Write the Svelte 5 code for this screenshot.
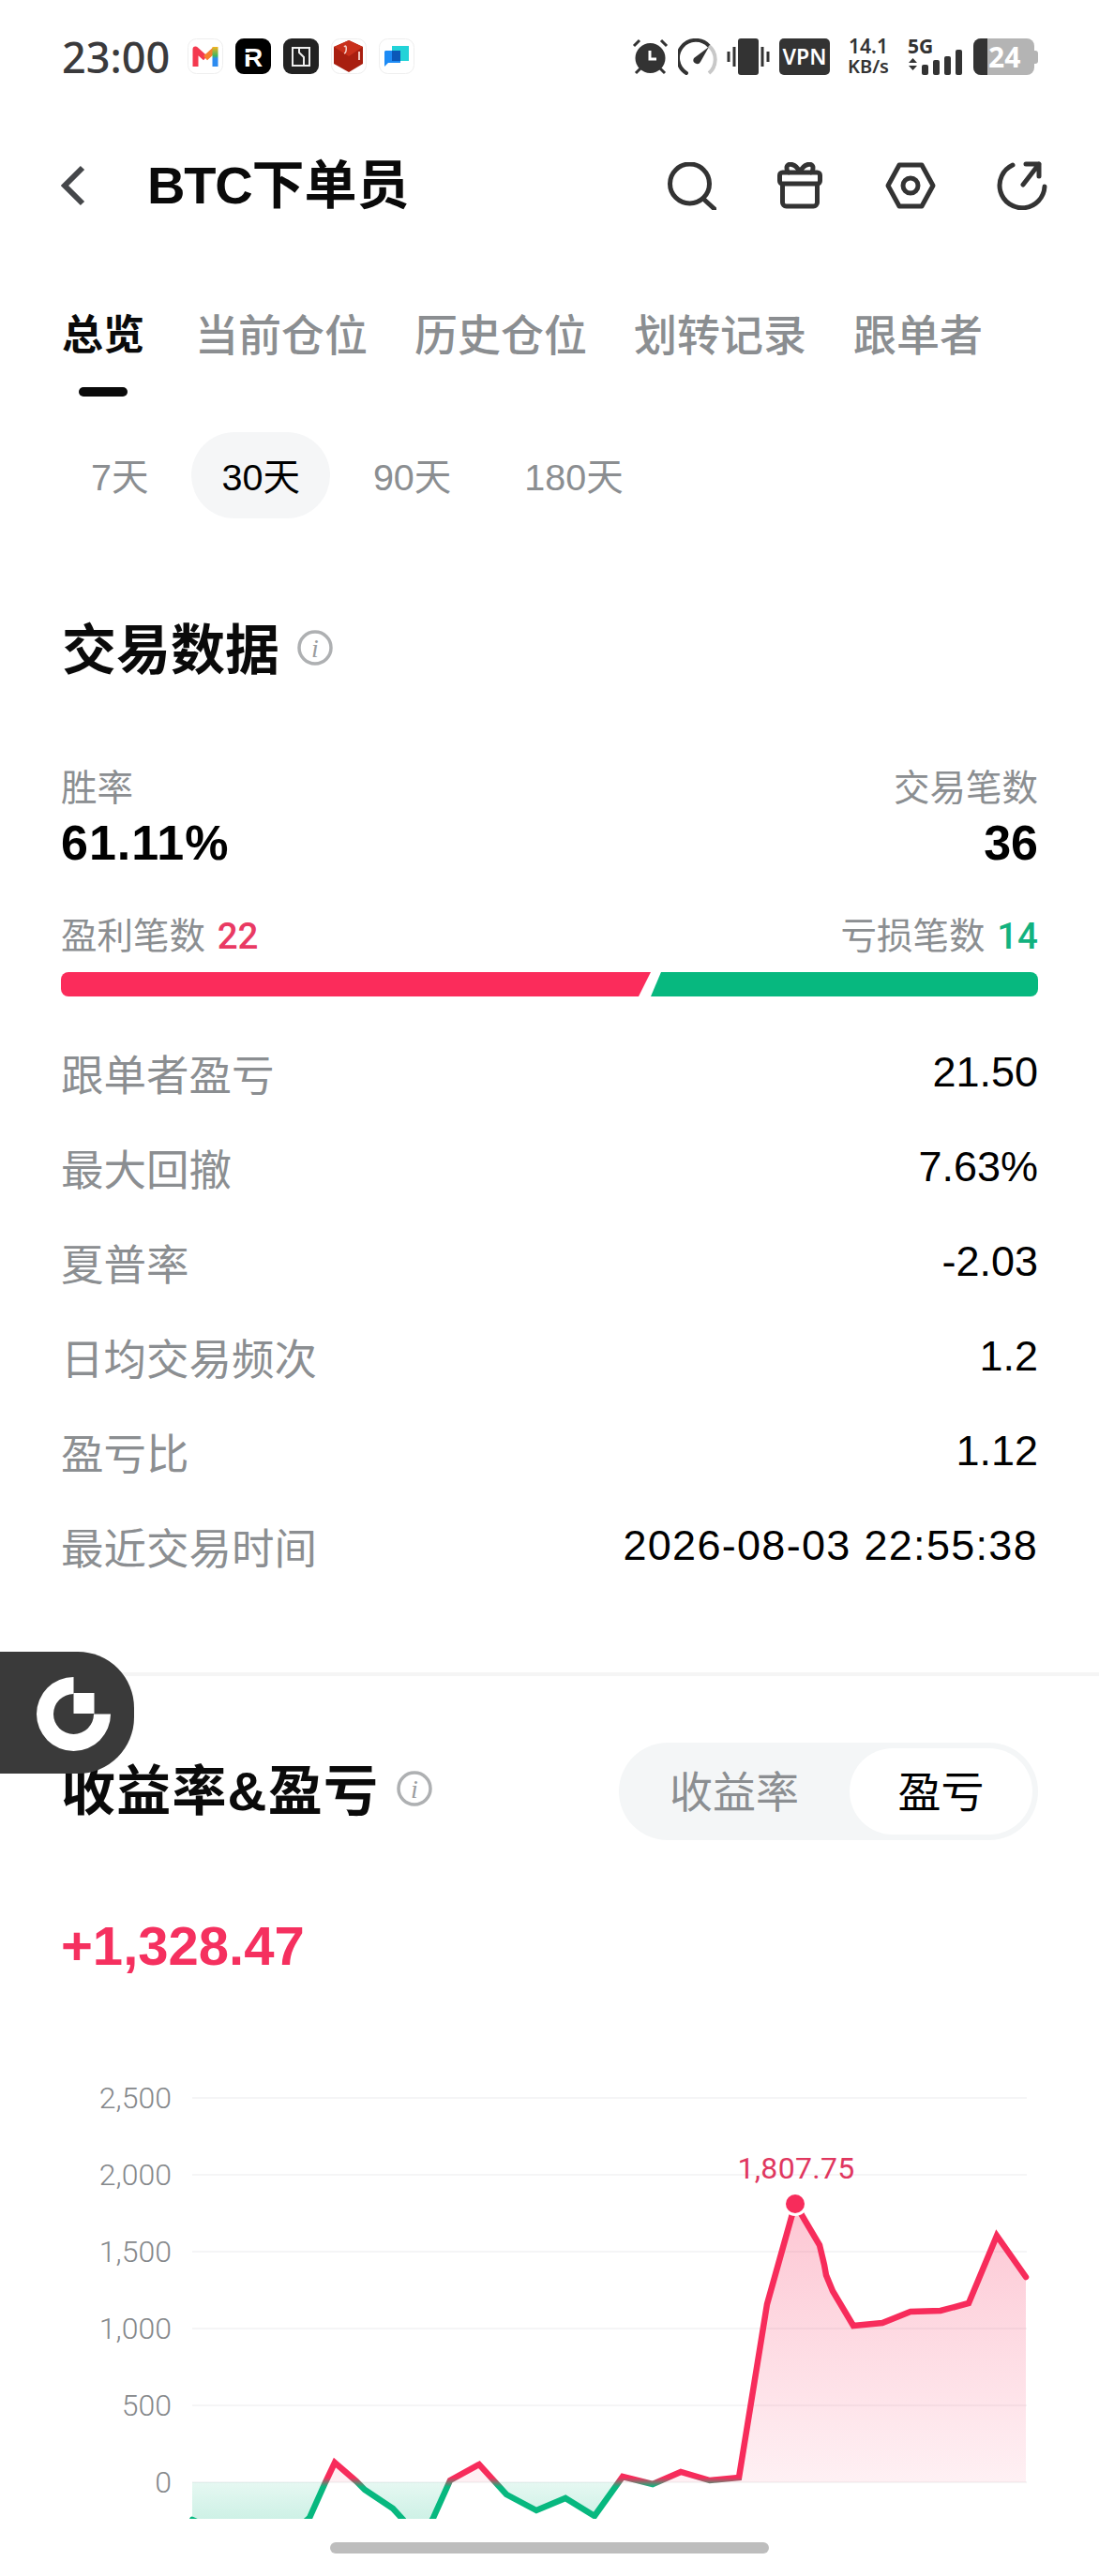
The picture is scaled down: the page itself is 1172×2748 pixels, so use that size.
<script lang="ts">
	const tabs = ['总览', '当前仓位', '历史仓位', '划转记录', '跟单者']
	const ranges = ['7天', '30天', '90天', '180天']
	const rows = [
		['跟单者盈亏', '21.50'],
		['最大回撤', '7.63%'],
		['夏普率', '-2.03'],
		['日均交易频次', '1.2'],
		['盈亏比', '1.12'],
		['最近交易时间', '2026-08-03 22:55:38']
	]

	// chart is drawn in page coordinates, see viewBox
	const left = 205
	const right = 1095
	const zero = 2648
	const clipBottom = 2687
	const grid = [
		['2,500', 2238],
		['2,000', 2320],
		['1,500', 2402],
		['1,000', 2484],
		['500', 2566],
		['0', zero]
	] as const
	const points = [
		[205, 2688], [236, 2702], [267, 2712], [300, 2712], [330, 2686], [347, 2648], [357, 2627],
		[380, 2647], [389, 2656], [419, 2676], [430, 2688], [447, 2712], [462, 2686],
		[480, 2646], [511, 2629], [540, 2661], [572, 2678], [603, 2665], [634, 2684],
		[664, 2642], [696, 2650], [726, 2637], [757, 2646], [788, 2643], [818, 2458],
		[848, 2351], [874, 2395], [879, 2416], [881, 2427], [888, 2444], [910, 2481],
		[941, 2478], [971, 2466], [1003, 2465], [1033, 2457], [1063, 2385], [1094, 2429]
	]
	const linePts = points.map((p) => p.join(',')).join(' ')
	const areaPts = `${left},${zero} ${linePts} 1094,${zero}`
</script>

<div class="page">
	<div class="status">
		<div class="status-left">
			<span class="time">23:00</span>
			<svg class="nicon" viewBox="0 0 38 38">
				<defs>
					<linearGradient id="gmRight" x1="0" y1="0" x2="0" y2="1">
						<stop offset="0" stop-color="#f6b21e" />
						<stop offset=".45" stop-color="#3fb65f" />
						<stop offset=".6" stop-color="#2d8cf0" />
					</linearGradient>
				</defs>
				<rect x=".5" y=".5" width="37" height="37" rx="9" fill="#fff" stroke="#eee" />
				<path d="M8.500 30V11.500L19 21" fill="none" stroke="#f4394f" stroke-width="6" stroke-linejoin="round" />
				<path d="M19 21 29.500 11.500" fill="none" stroke="#f6802e" stroke-width="6" />
				<rect x="26.500" y="9" width="6" height="21" fill="url(#gmRight)" />
			</svg>
			<svg class="nicon" viewBox="0 0 38 38">
				<rect width="38" height="38" rx="9" fill="#000" />
				<text x="19" y="30" text-anchor="middle" class="r-logo">R</text>
				<path d="M8 16h13" stroke="#000" stroke-width="2" />
			</svg>
			<svg class="nicon" viewBox="0 0 38 38">
				<rect width="38" height="38" rx="9" fill="#222" />
				<rect x="10" y="10" width="18" height="19" fill="none" stroke="#eee" stroke-width="2" />
				<path d="M17 10v5l5 5v9" fill="none" stroke="#eee" stroke-width="2" />
			</svg>
			<svg class="nicon" viewBox="0 0 38 38">
				<rect x=".5" y=".5" width="37" height="37" rx="9" fill="#fff" stroke="#eee" />
				<path d="M19 2 34 9V27L19 36 3 27V9Z" fill="#a81f10" />
				<path d="M19 2 34 9 19 19 3 9Z" fill="#c9301b" />
				<path d="M14 9c3-4 3 6 0 7" fill="none" stroke="#f4d6d0" stroke-width="1.500" />
				<path d="M30 14v9" stroke="#f0c8c0" stroke-width="2" />
			</svg>
			<svg class="nicon" viewBox="0 0 38 38">
				<rect x=".5" y=".5" width="37" height="37" rx="9" fill="#fff" stroke="#eee" />
				<path d="M14 8h18v16h-18Z" fill="#22d3d8" />
				<path d="M7 13h16v13H10l-4 4V14Z" fill="#1d8bf5" />
				<path d="M14 13h9v11h-9Z" fill="#0b57b8" />
			</svg>
		</div>
		<div class="status-right">
			<svg class="sicon" width="39" height="39" viewBox="0 0 39 39">
				<circle cx="19.500" cy="21" r="16" fill="#333" />
				<path d="M19 13v9h7" fill="none" stroke="#fff" stroke-width="3" />
				<path d="M2 8 8 2M37 8 31 2M4 37l5-5M35 37l-5-5" stroke="#333" stroke-width="3" />
			</svg>
			<svg class="sicon" width="42" height="39" viewBox="0 0 42 39">
				<path d="M9 37A19 19 0 1 1 33 8" fill="none" stroke="#333" stroke-width="4" stroke-linecap="round" />
				<path d="M33 8A19 19 0 0 1 33 37" fill="none" stroke="#c8c8c8" stroke-width="4" />
				<path d="M33 9 24 25a4 4 0 0 1-7-4Z" fill="#333" />
			</svg>
			<svg class="sicon" width="46" height="39" viewBox="0 0 46 39">
				<rect x="12" width="22" height="39" rx="3" fill="#333" />
				<path d="M2 14v11M8 9v21M38 9v21M44 14v11" stroke="#333" stroke-width="3" />
			</svg>
			<span class="vpn">VPN</span>
			<span class="speed"><b>14.1</b><b class="unit">KB/s</b></span>
			<span class="signal">
				<span class="fiveg">5G</span>
				<svg class="sicon" width="58" height="39" viewBox="0 0 58 39">
					<path d="M1 26 5.500 21 10 26ZM1 29 5.500 34 10 29Z" fill="#333" />
					<rect x="15" y="28" width="7" height="11" rx="2" fill="#333" />
					<rect x="27" y="23" width="7" height="16" rx="2" fill="#333" />
					<rect x="39" y="19" width="7" height="20" rx="2" fill="#333" />
					<rect x="51" y="12" width="7" height="27" rx="2" fill="#333" />
				</svg>
			</span>
			<span class="battery">
				<span class="batt-level"></span>
				<span class="batt-num">24</span>
				<span class="batt-tip"></span>
			</span>
		</div>
	</div>

	<div class="nav">
		<svg class="back" width="26" height="44" viewBox="0 0 26 44">
			<path d="M23 3 4 22l19 19" fill="none" stroke="#45474a" stroke-width="6" />
		</svg>
		<h1 class="title"><span class="latin">BTC</span>下单员</h1>
		<div class="nav-icons">
			<svg width="52" height="51" viewBox="0 0 52 51" fill="none" stroke="#333" stroke-width="5">
				<circle cx="23.500" cy="23" r="21" />
				<path d="M38 39 50 50" stroke-linecap="round" />
			</svg>
			<svg width="48" height="50" viewBox="0 0 48 50" fill="none" stroke="#333" stroke-width="5" stroke-linejoin="round">
				<rect x="2.500" y="11" width="43" height="12" rx="3" />
				<path d="M5.500 23v20a4 4 0 0 0 4 4h29a4 4 0 0 0 4-4V23" />
				<path d="M24 11C20 1 10 0 10 6c0 3 1 5 3 5M24 11c4-10 14-11 14-5 0 3-1 5-3 5" />
			</svg>
			<svg width="54" height="50" viewBox="0 0 54 50" fill="none" stroke="#333" stroke-width="5" stroke-linejoin="round">
				<path d="M15 3h24l12 22-12 22H15L3 25Z" />
				<circle cx="27" cy="25" r="8" />
			</svg>
			<svg width="54" height="52" viewBox="0 0 54 52" fill="none" stroke="#333" stroke-width="5" stroke-linecap="round" stroke-linejoin="round">
				<path d="M17 4A24 24 0 1 0 51 27" />
				<path d="M31 3h14v13M45 3 28 25" />
			</svg>
		</div>
	</div>

	<div class="tabs">
		{#each tabs as tab, i}
			<div class="tab" class:active={i === 0}>
				<span>{tab}</span>
				{#if i === 0}<i class="indicator"></i>{/if}
			</div>
		{/each}
	</div>

	<div class="ranges">
		{#each ranges as r, i}
			<span class="range" class:on={i === 1}>{r}</span>
		{/each}
	</div>

	<div class="heading first">
		<h2>交易数据</h2>
		{@render info()}
	</div>

	<div class="pair top">
		<span class="muted">胜率</span>
		<span class="muted">交易笔数</span>
	</div>
	<div class="pair big">
		<span class="rate">61.11%</span>
		<span>36</span>
	</div>

	<div class="pair counts">
		<span class="muted">盈利笔数 <em class="red">22</em></span>
		<span class="muted">亏损笔数 <em class="green">14</em></span>
	</div>
	<div class="ratio">
		<div class="ratio-red"></div>
		<div class="ratio-green"></div>
	</div>

	<div class="rows">
		{#each rows as [label, value], i}
			<div class="row">
				<span class="row-label">{label}</span>
				<span class="row-value" class:wide={i === rows.length - 1}>{value}</span>
			</div>
		{/each}
	</div>

	<div class="divider"></div>

	<div class="profit-head">
		<div class="heading">
			<h2 class="spaced">收益率&amp;盈亏</h2>
			{@render info()}
		</div>
		<div class="toggle">
			<span class="toggle-off">收益率</span>
			<span class="toggle-on">盈亏</span>
		</div>
	</div>

	<div class="profit">+1,328.47</div>

	<svg class="chart" width="1172" height="500" viewBox="0 2200 1172 500">
		<defs>
			<linearGradient id="redFill" gradientUnits="userSpaceOnUse" x1="0" y1="2350" x2="0" y2={zero}>
				<stop offset="0" stop-color="#f72c5b" stop-opacity=".27" />
				<stop offset="1" stop-color="#f72c5b" stop-opacity=".07" />
			</linearGradient>
			<linearGradient id="greenFill" gradientUnits="userSpaceOnUse" x1="0" y1={zero} x2="0" y2={clipBottom}>
				<stop offset="0" stop-color="#07b87f" stop-opacity=".1" />
				<stop offset="1" stop-color="#07b87f" stop-opacity=".2" />
			</linearGradient>
			<linearGradient id="lineColor" gradientUnits="userSpaceOnUse" x1="0" y1={zero - 5} x2="0" y2={zero + 5}>
				<stop offset="0" stop-color="#f72c5b" />
				<stop offset="1" stop-color="#07b87f" />
			</linearGradient>
			<clipPath id="above"><rect x={left} y="2200" width={right - left} height={zero - 2200} /></clipPath>
			<clipPath id="below"><rect x={left} y={zero} width={right - left} height={clipBottom - zero} /></clipPath>
			<clipPath id="plot"><rect x={left - 6} y="2200" width={right - left + 12} height={clipBottom - 2200} /></clipPath>
		</defs>

		{#each grid as [label, y]}
			<line x1={left} x2={right} y1={y} y2={y} class="gridline" />
			<text x="183" y={y + 11} text-anchor="end" class="axis">{label}</text>
		{/each}

		<polygon points={areaPts} fill="url(#redFill)" clip-path="url(#above)" />
		<polygon points={areaPts} fill="url(#greenFill)" clip-path="url(#below)" />
		<g clip-path="url(#plot)">
			<polyline points={linePts} class="line" stroke="url(#lineColor)" />
		</g>

		<circle cx="848" cy="2351" r="13" fill="#fff" />
		<circle cx="848" cy="2351" r="10" fill="#f72c5b" />
		<text x="849" y="2324" text-anchor="middle" class="peak">1,807.75</text>
	</svg>

	<div class="home-bar"></div>

	<div class="float-badge">
		<svg width="80" height="80" viewBox="0 0 80 80" fill="#fff">
			<path d="M39.500 1A39.500 39.500 0 1 0 79 40.500H61A21.500 21.500 0 1 1 39.500 19Z" />
			<rect x="39.500" y="18" width="22" height="22" />
		</svg>
	</div>
</div>

{#snippet info()}
	<svg class="info" width="38" height="38" viewBox="0 0 38 38">
		<circle cx="19" cy="19" r="17" fill="none" stroke="#aeb0b2" stroke-width="3.500" />
		<text x="19" y="29" text-anchor="middle" class="info-i">i</text>
	</svg>
{/snippet}

<style>
	:global(body) {
		margin: 0;
		background: #fff;
	}

	.page {
		position: relative;
		width: 1172px;
		height: 2748px;
		overflow: hidden;
		background: #fff;
		font-family: "Liberation Sans", "Noto Sans CJK SC", sans-serif;
		color: #000;
	}

	.status {
		height: 120px;
		padding: 0 65px 0 66px;
		display: flex;
		align-items: center;
		justify-content: space-between;
	}

	.status-left {
		display: flex;
		align-items: center;
	}

	.time {
		font-family: "Noto Sans", sans-serif;
		font-size: 45px;
		font-weight: 500;
		color: #3a3a3c;
		width: 134px;
	}

	.nicon {
		width: 38px;
		height: 38px;
		margin-right: 13px;
	}

	.r-logo {
		font-family: "Liberation Sans", sans-serif;
		font-weight: 700;
		font-size: 28px;
		fill: #fff;
	}

	.status-right {
		display: flex;
		align-items: center;
		gap: 10px;
	}

	.sicon {
		flex: none;
		display: block;
	}

	.vpn {
		width: 54px;
		height: 39px;
		background: #333;
		border-radius: 5px;
		color: #fff;
		font-family: "Noto Sans", sans-serif;
		font-size: 23px;
		font-weight: 600;
		line-height: 39px;
		text-align: center;
		margin-right: 9px;
	}

	.speed {
		width: 44px;
		display: flex;
		flex-direction: column;
		align-items: center;
		font-family: "Noto Sans", sans-serif;
		color: #333;
		margin-right: 10px;
		white-space: nowrap;
	}

	.speed b {
		font-size: 21px;
		line-height: 22px;
		font-weight: 600;
	}

	.speed .unit {
		font-size: 20px;
	}

	.signal {
		position: relative;
		height: 39px;
	}

	.fiveg {
		position: absolute;
		left: 0;
		top: 0;
		font-family: "Noto Sans", sans-serif;
		font-size: 21px;
		font-weight: 700;
		line-height: 17px;
		color: #333;
	}

	.battery {
		position: relative;
		width: 65px;
		height: 39px;
		margin-left: 2px;
		margin-right: 4px;
		background: #b4b4b4;
		border-radius: 8px;
		display: flex;
		align-items: center;
	}

	.batt-level {
		width: 15px;
		height: 39px;
		background: #333;
		border-radius: 8px 0 0 8px;
	}

	.batt-num {
		margin-left: 1px;
		color: #fff;
		font-family: "Noto Sans", sans-serif;
		font-size: 30px;
		font-weight: 700;
		line-height: 39px;
	}

	.batt-tip {
		position: absolute;
		right: -4px;
		top: 13px;
		width: 4px;
		height: 14px;
		background: #b4b4b4;
		border-radius: 0 3px 3px 0;
	}

	.nav {
		height: 156px;
		padding: 0 55px 0 65px;
		display: flex;
		align-items: center;
	}

	.back {
		flex: none;
	}

	.title {
		margin: 0 0 0 66px;
		font-size: 56px;
		font-weight: 700;
		color: #0a0a0a;
		line-height: 70px;
	}

	.latin {
		letter-spacing: -1.200px;
	}

	.nav-icons {
		margin-left: auto;
		display: flex;
		align-items: center;
		gap: 65px;
	}

	.nav-icons svg:nth-child(3) {
		margin-left: 2px;
	}

	.tabs {
		height: 147px;
		padding: 52px 0 0 66px;
		box-sizing: border-box;
		display: flex;
		align-items: flex-start;
		gap: 50px;
	}

	.tab {
		display: flex;
		flex-direction: column;
		align-items: center;
		font-size: 46px;
		font-weight: 500;
		line-height: 60px;
		color: #8b8e91;
	}

	.tab.active {
		color: #0a0a0a;
		font-weight: 700;
		font-size: 44px;
		margin-right: 4px;
	}

	.indicator {
		display: block;
		width: 52px;
		height: 10px;
		margin-top: 25px;
		background: #0a0a0a;
		border-radius: 5px;
	}

	.ranges {
		margin-top: 38px;
		padding-left: 65px;
		display: flex;
		gap: 14px;
	}

	.range {
		height: 92px;
		padding: 0 32px;
		border-radius: 46px;
		font-size: 39.500px;
		line-height: 96px;
		color: #8b8e91;
	}

	.range.on {
		background: #f5f6f7;
		color: #000;
	}

	.heading {
		display: flex;
		align-items: center;
		gap: 19px;
	}

	.heading.first {
		margin: 106px 0 0 66px;
	}

	.heading h2 {
		margin: 0;
		font-size: 58px;
		font-weight: 700;
		line-height: 70px;
		color: #0a0a0a;
	}

	.heading h2.spaced {
		letter-spacing: 1.200px;
	}

	.info {
		flex: none;
		margin-top: -7px;
	}

	.info-i {
		font-family: "Liberation Serif", serif;
		font-style: italic;
		font-size: 28px;
		fill: #9b9d9f;
	}

	.pair {
		padding: 0 65px;
		display: flex;
		justify-content: space-between;
	}

	.muted {
		font-size: 38.500px;
		color: #8b8e91;
	}

	.pair.top {
		margin-top: 87px;
		line-height: 50px;
	}

	.pair.big {
		margin-top: 3px;
		font-size: 52px;
		font-weight: 700;
		line-height: 60px;
	}

	.rate {
		letter-spacing: 1px;
	}

	.pair.counts {
		margin-top: 45px;
		line-height: 50px;
	}

	.counts em {
		font-family: "Roboto", sans-serif;
		font-style: normal;
		font-weight: 500;
		font-size: 38.500px;
		margin-left: 2px;
	}

	.red {
		color: #e93a63;
	}

	.green {
		color: #12b27f;
	}

	.ratio {
		margin: 13px 65px 0 65px;
		height: 26px;
		display: flex;
	}

	.ratio-red {
		width: 629px;
		background: #fb2c5b;
		border-radius: 8px 0 0 8px;
		clip-path: polygon(0 0, 100% 0, calc(100% - 13px) 100%, 0 100%);
	}

	.ratio-green {
		flex: 1;
		background: #07b87f;
		border-radius: 0 8px 8px 0;
		clip-path: polygon(11px 0, 100% 0, 100% 100%, 0 100%);
	}

	.rows {
		margin-top: 30px;
		padding: 0 65px;
	}

	.row {
		height: 101px;
		display: flex;
		align-items: center;
		justify-content: space-between;
	}

	.row-label {
		font-size: 45.500px;
		color: #8b8e91;
	}

	.row-value {
		font-size: 45px;
	}

	.row-value.wide {
		letter-spacing: 1.300px;
	}

	.divider {
		height: 4px;
		margin-top: 85px;
		background: #f5f5f5;
	}

	.profit-head {
		margin-top: 71px;
		padding: 0 65px;
		display: flex;
		align-items: center;
		justify-content: space-between;
	}

	.toggle {
		width: 447px;
		height: 104px;
		box-sizing: border-box;
		padding: 6px 6px 6px 0;
		display: flex;
		background: #f4f6f7;
		border-radius: 52px;
		font-size: 46px;
		line-height: 94px;
		text-align: center;
	}

	.toggle-off {
		width: 246px;
		color: #8b8e91;
	}

	.toggle-on {
		flex: 1;
		background: #fff;
		border-radius: 46px;
		color: #000;
	}

	.profit {
		margin: 78px 0 0 65px;
		font-size: 58px;
		font-weight: 700;
		line-height: 70px;
		color: #f5305f;
	}

	.chart {
		display: block;
		margin-top: 89px;
	}

	.gridline {
		stroke: #f5f5f6;
		stroke-width: 2;
	}

	.axis {
		font-family: "Roboto", sans-serif;
		font-weight: 300;
		font-size: 32px;
		fill: #85888b;
	}

	.line {
		fill: none;
		stroke-width: 6.500;
		stroke-linecap: round;
	}

	.peak {
		font-family: "Roboto", sans-serif;
		font-size: 32px;
		letter-spacing: .3px;
		fill: #e0375f;
	}

	.home-bar {
		width: 468px;
		height: 12px;
		margin: 12px auto 0;
		background: #bdbdbd;
		border-radius: 6px;
	}

	.float-badge {
		position: absolute;
		left: 0;
		top: 1762px;
		width: 143px;
		height: 130px;
		box-sizing: border-box;
		padding: 26px 0 0 39px;
		background: #3a3a3a;
		border-radius: 0 60px 60px 0;
	}

	.float-badge svg {
		display: block;
	}
</style>
